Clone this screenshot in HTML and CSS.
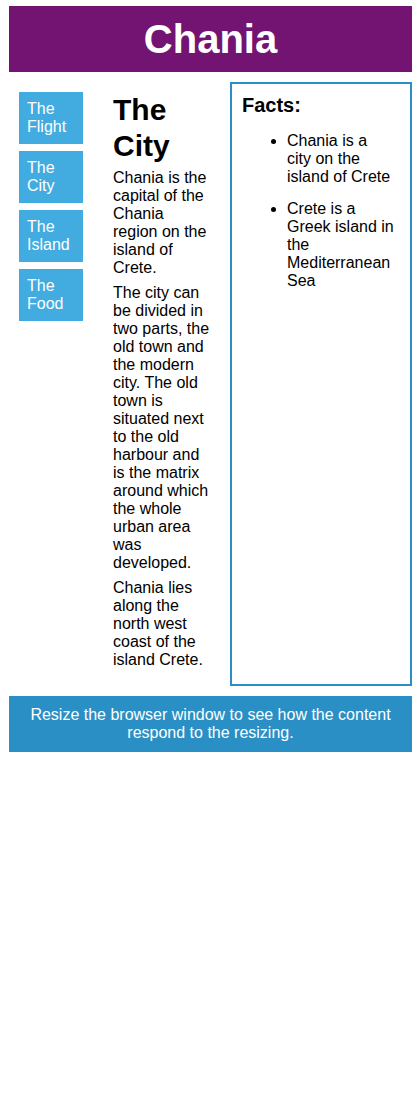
FILE: index.html
```html
<!DOCTYPE html>
<html lang="en">
<head>
<meta charset="utf-8">
<title>Chania</title>
<link rel="stylesheet" href="styles.css">
</head>
<body>
<div class="page">
  <header class="header"><h1>Chania</h1></header>
  <div class="row">
    <nav class="menu">
      <ul>
        <li>The Flight</li>
        <li>The City</li>
        <li>The Island</li>
        <li>The Food</li>
      </ul>
    </nav>
    <main class="main">
      <h2>The City</h2>
      <p>Chania is the capital of the Chania region on the island of Crete.</p>
      <p>The city can be divided in two parts, the old town and the modern city. The old town is situated next to the old harbour and is the matrix around which the whole urban area was developed.</p>
      <p>Chania lies along the north west coast of the island Crete.</p>
    </main>
    <aside class="aside">
      <h3>Facts:</h3>
      <ul>
        <li>Chania is a city on the island of Crete</li>
        <li>Crete is a Greek island in the Mediterranean Sea</li>
      </ul>
    </aside>
  </div>
  <footer class="footer">Resize the browser window to see how the content respond to the resizing.</footer>
</div>
</body>
</html>
```

FILE: styles.css
```css
* { box-sizing: border-box; }
html, body { margin: 0; padding: 0; background: #fff; }
body { font-family: "Liberation Sans", Arial, sans-serif; font-size: 16px; line-height: 18px; color: #000; }
.page { padding: 6px 6px 0 9px; }
.header { background: #731472; color: #fff; padding: 10px; text-align: center; }
.header h1 { margin: 0; font-size: 40px; line-height: 46px; font-weight: bold; }
.row { display: grid; grid-template-columns: 94px 127px 182px; margin-top: 10px; }
.menu { padding: 10px; }
.menu ul { list-style: none; margin: 0; padding: 0; width: 64px; display: flex; flex-direction: column; gap: 7px; }
.menu li { background: #42ace0; color: #fff; padding: 8px; }
.main { padding: 10px 19px 10px 10px; }
.main h2 { margin: 0 0 5px; font-size: 30px; line-height: 36px; font-weight: bold; }
.main p { margin: 0 0 7px; }
.aside { border: 2px solid #2b8fc5; padding: 10px; }
.aside h3 { margin: 0; font-size: 20px; line-height: 22px; font-weight: bold; }
.aside ul { margin: 16px 0 0; padding: 0 5px 0 45px; }
.aside li { margin-bottom: 14px; }
.footer { background: #2a8fc5; color: #fff; text-align: center; padding: 10px; margin-top: 10px; }
```
